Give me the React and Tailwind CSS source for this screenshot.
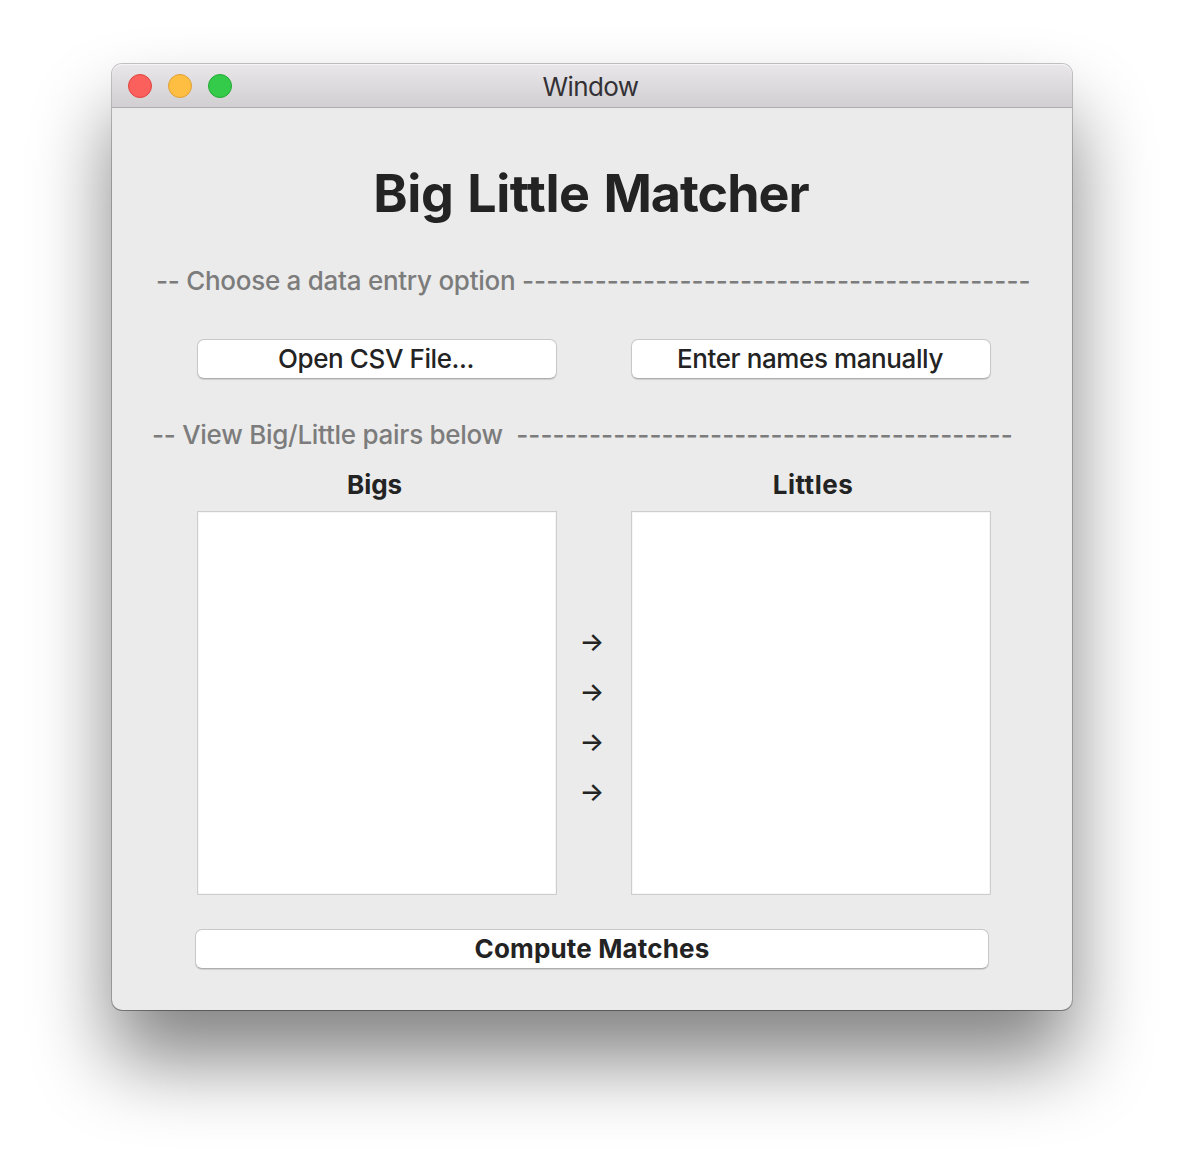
function Divider({ label, dashes, className }) {
  return (
    <p className={"flex h-10 items-center whitespace-pre text-[26px] leading-10 font-[450] text-[#7c7c7c] " + className}>
      <span className="tracking-[-0.27px]">{label}</span>
      <span className="tracking-[0.09px]">{"-".repeat(dashes)}</span>
    </p>
  );
}

function PushButton({ children, className }) {
  return (
    <button className={"flex h-10 items-center justify-center rounded-[7px] border border-[#c8c8c8] border-b-[#adadad] bg-white text-[26px] leading-10 whitespace-nowrap shadow-[0_1px_1px_rgba(0,0,0,0.12)] " + className}>
      {children}
    </button>
  );
}

function ListBox() {
  return <div className="h-[384px] w-[360px] border border-[#cdcdcd] bg-white shadow-[inset_0_0_0_1px_#f6f6f6]" />;
}

export default function App() {
  return (
    <div className="h-[1170px] w-[1184px] overflow-hidden bg-white px-[112px] pt-[64px] font-['Inter',sans-serif] text-[#232323]">
      <div className="h-[946px] w-[960px] rounded-[10px] bg-[#ebebeb] shadow-[0_0_0_1px_rgba(0,0,0,0.22),0_1px_0_0_rgba(0,0,0,0.2),0_50px_80px_rgba(0,0,0,0.49)]">
        <header className="flex h-[44px] items-center rounded-t-[10px] border-b border-[#b0adb1] bg-linear-to-b from-[#e9e7ea] to-[#d1cfd2] px-4 shadow-[inset_0_1px_0_#f5f4f5]">
          <div className="flex flex-1 gap-4">
            <i className="size-6 rounded-full border border-[#e0443e] bg-[#fc605c]" />
            <i className="size-6 rounded-full border border-[#dfa035] bg-[#fdbe41]" />
            <i className="size-6 rounded-full border border-[#23a935] bg-[#34cb4a]" />
          </div>
          <span className="mt-[3px] mr-[3px] text-[26px] leading-8 tracking-[-0.6px] text-[#333135]">Window</span>
          <div className="flex-1" />
        </header>
        <main>
          <h1 className="mt-[48px] mr-[2px] text-center text-[52px] leading-[76px] font-bold tracking-[-0.4px] [word-spacing:1.8px]">
            Big Little <span className="tracking-[-1px]">Matcher</span>
          </h1>
          <Divider className="mt-[29px] ml-[44px]" label="-- Choose a data entry option " dashes={42} />
          <div className="mt-[38px] ml-[85px] flex gap-[74px]">
            <PushButton className="w-[360px] pr-[2px] font-[450] tracking-[-0.4px]">Open CSV File...</PushButton>
            <PushButton className="w-[360px] pr-[2px] font-[450] tracking-[-0.4px]">Enter names manually</PushButton>
          </div>
          <Divider className="mt-[36px] ml-[40px]" label="-- View Big/Little pairs below  " dashes={41} />
          <div className="mt-[12px] ml-[85px] flex h-9 gap-[74px] text-center text-[26px] leading-9 font-bold">
            <h2 className="w-[360px] pr-[5px] tracking-[-0.1px]">Bigs</h2>
            <h2 className="w-[360px] pl-[4px] tracking-[0.5px]">Littles</h2>
          </div>
          <div className="mt-[8px] ml-[85px] flex">
            <ListBox />
            <div className="flex w-[74px] flex-col items-center pt-[106px] pr-[4px] text-[26px] leading-[50px] font-medium">
              <span>→</span>
              <span>→</span>
              <span>→</span>
              <span>→</span>
            </div>
            <ListBox />
          </div>
          <PushButton className="mt-[34px] ml-[83px] w-[794px] font-bold tracking-[0.16px]">Compute Matches</PushButton>
        </main>
      </div>
    </div>
  );
}
